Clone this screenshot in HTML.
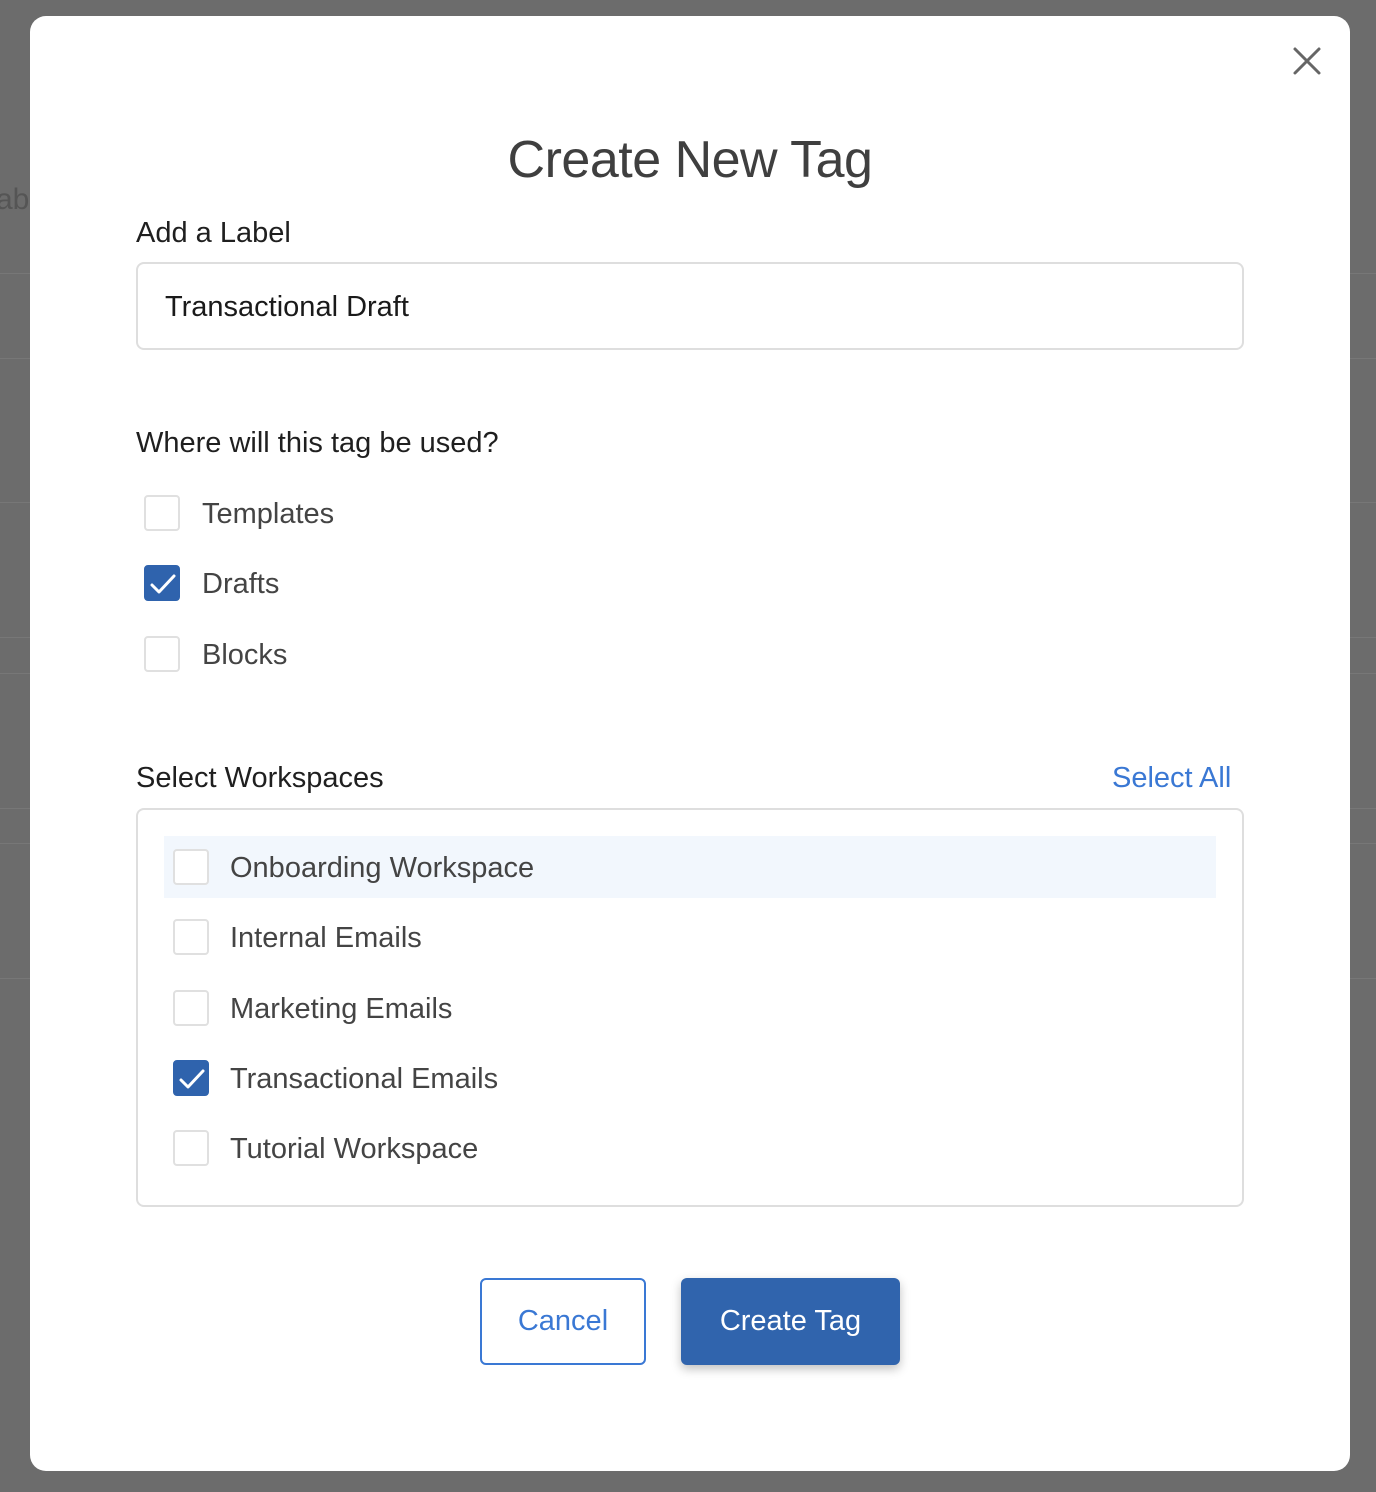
<!DOCTYPE html>
<html><head><meta charset="utf-8"><style>
*{box-sizing:border-box;margin:0;padding:0}
body{width:1376px;height:1492px;background:#6c6c6c;position:relative;overflow:hidden;font-family:"Liberation Sans",sans-serif}
.bl{position:absolute;left:0;right:0;height:1px;background:#777}
.modal{position:absolute;left:30px;top:16px;width:1320px;height:1455px;background:#fff;border-radius:16px}
.abs{position:absolute}
.close{left:1262px;top:30px}
h1{position:absolute;left:0;width:1320px;top:114px;text-align:center;font-weight:400;font-size:52px;color:#3f3f3f;letter-spacing:-0.5px}
.lbl{position:absolute;left:106px;font-size:29px;color:#1f1f1f}
.input{position:absolute;left:106px;top:246px;width:1108px;height:88px;border:2px solid #dedede;border-radius:8px;font-size:29px;color:#1a1a1a;padding:27px 0 0 27px}
.cb{position:absolute;width:36px;height:36px;border:2px solid #e0e0e0;border-radius:4px;background:#fff}
.cb.on{background:#2f63ad;border-color:#2f63ad}
.cb svg{position:absolute;left:3px;top:4px}
.t{position:absolute;font-size:29px;color:#444}
.box{position:absolute;left:106px;top:792px;width:1108px;height:399px;border:2px solid #dedede;border-radius:8px}
.hl{position:absolute;left:134px;top:820px;width:1052px;height:62px;background:#f2f7fd}
.btn{position:absolute;top:1262px;height:87px;border-radius:6px;font-size:29px;text-align:center;line-height:87px}
</style></head><body>
<div class="bl" style="top:273px"></div><div class="bl" style="top:358px"></div><div class="bl" style="top:502px"></div><div class="bl" style="top:637px"></div><div class="bl" style="top:673px"></div><div class="bl" style="top:808px"></div><div class="bl" style="top:843px"></div><div class="bl" style="top:978px"></div>
<div class="abs" style="left:-4px;top:183px;font-size:30px;color:#555">ab</div>
<div class="modal">
<svg class="abs close" width="30" height="30" viewBox="0 0 30 30"><path d="M3 3L27 27M27 3L3 27" stroke="#666" stroke-width="3" stroke-linecap="round"/></svg>
<h1>Create New Tag</h1>
<div class="lbl" style="top:201px">Add a Label</div>
<div class="input">Transactional Draft</div>
<div class="lbl" style="top:411px">Where will this tag be used?</div>
<div class="cb" style="left:114px;top:479px"></div><div class="t" style="left:172px;top:482px">Templates</div>
<div class="cb on" style="left:114px;top:549px"><svg width="28" height="26" viewBox="0 0 28 26"><path d="M3 14L10 21L25 5" stroke="#fff" stroke-width="3" fill="none" stroke-linecap="round" stroke-linejoin="round"/></svg></div><div class="t" style="left:172px;top:552px">Drafts</div>
<div class="cb" style="left:114px;top:620px"></div><div class="t" style="left:172px;top:623px">Blocks</div>
<div class="lbl" style="top:746px">Select Workspaces</div>
<div class="t" style="left:1082px;top:746px;color:#3a78d4">Select All</div>
<div class="box"></div>
<div class="hl"></div>
<div class="cb" style="left:143px;top:833px"></div><div class="t" style="left:200px;top:836px">Onboarding Workspace</div>
<div class="cb" style="left:143px;top:903px"></div><div class="t" style="left:200px;top:906px">Internal Emails</div>
<div class="cb" style="left:143px;top:974px"></div><div class="t" style="left:200px;top:977px">Marketing Emails</div>
<div class="cb on" style="left:143px;top:1044px"><svg width="28" height="26" viewBox="0 0 28 26"><path d="M3 14L10 21L25 5" stroke="#fff" stroke-width="3" fill="none" stroke-linecap="round" stroke-linejoin="round"/></svg></div><div class="t" style="left:200px;top:1047px">Transactional Emails</div>
<div class="cb" style="left:143px;top:1114px"></div><div class="t" style="left:200px;top:1117px">Tutorial Workspace</div>
<div class="btn" style="left:450px;width:166px;border:2px solid #3a78d4;color:#3a78d4;line-height:83px">Cancel</div>
<div class="btn" style="left:651px;width:219px;background:#3064ad;color:#fff;box-shadow:0 4px 10px rgba(0,0,0,.25)">Create Tag</div>
</div>
</body></html>
